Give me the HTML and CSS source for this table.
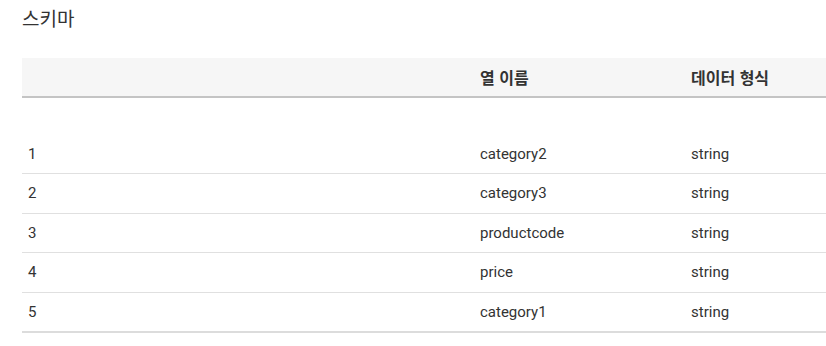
FILE: index.html
```html
<!DOCTYPE html>
<html lang="ko">
<head>
<meta charset="utf-8">
<link rel="stylesheet" href="styles.css">
</head>
<body>
<div class="page">
  <h2 class="title">스키마</h2>
  <table class="schema">
    <colgroup>
      <col class="c-idx">
      <col class="c-name">
      <col class="c-type">
    </colgroup>
    <thead>
      <tr><th></th><th>열 이름</th><th>데이터 형식</th></tr>
    </thead>
    <tbody>
      <tr class="spacer"><td colspan="3"></td></tr>
      <tr><td>1</td><td>category2</td><td>string</td></tr>
      <tr><td>2</td><td>category3</td><td>string</td></tr>
      <tr><td>3</td><td>productcode</td><td>string</td></tr>
      <tr><td>4</td><td>price</td><td>string</td></tr>
      <tr class="last"><td>5</td><td>category1</td><td>string</td></tr>
    </tbody>
  </table>
</div>
</body>
</html>
```
FILE: styles.css
```css
html, body {
  margin: 0;
  padding: 0;
  background: #fff;
  overflow: hidden;
}
body {
  font-family: Roboto, "Noto Sans CJK KR", Arial, sans-serif;
  color: #333;
}
.page {
  padding: 5px 0 0 22px;
}
.title {
  margin: 0;
  font-family: "Noto Sans CJK KR", sans-serif;
  font-weight: 400;
  font-size: 19px;
  line-height: 26px;
  color: #333;
}
.schema {
  margin-top: 27px;
  width: 804px;
  border-collapse: collapse;
  table-layout: fixed;
  font-size: 15px;
}
.c-idx { width: 452px; }
.c-name { width: 211px; }
.c-type { width: 141px; }
.schema th {
  background: #f6f6f6;
  height: 38px;
  padding: 0 6px;
  text-align: left;
  font-family: "Noto Sans CJK KR", sans-serif;
  font-weight: 700;
  font-size: 16px;
  color: #333;
  border-bottom: 2px solid #c4c4c4;
  vertical-align: middle;
}
.schema td {
  height: 39.5px;
  padding: 0 6px;
  border-bottom: 1px solid #e0e0e0;
  vertical-align: middle;
  color: #333;
  box-sizing: border-box;
}
.schema tr.spacer td {
  height: 37px;
  border-bottom: none;
}
.schema tr.last td {
  border-bottom: 2px solid #dcdcdc;
}
```
